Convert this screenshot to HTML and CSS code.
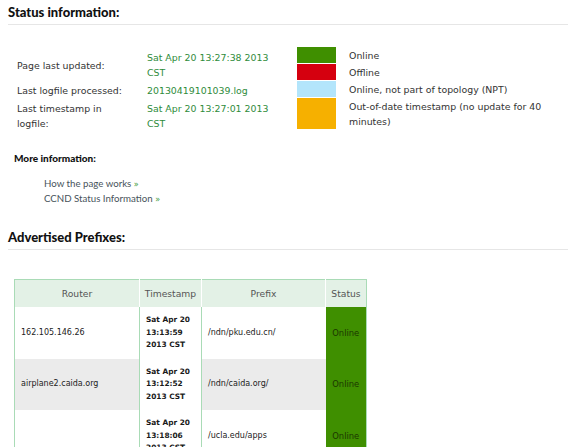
FILE: index.html
```html
<!DOCTYPE html>
<html lang="en">
<head>
<meta charset="utf-8">
<title>NDN Status</title>
<link rel="stylesheet" href="styles.css">
</head>
<body>
<div class="page">
  <h2 class="section-title">Status information:</h2>

  <div class="status">
    <div class="status-facts">
      <div class="fact-label">Page last updated:</div>
      <div class="fact-value">Sat Apr 20 13:27:38 2013 CST</div>
      <div class="fact-label">Last logfile processed:</div>
      <div class="fact-value">20130419101039.log</div>
      <div class="fact-label">Last timestamp in logfile:</div>
      <div class="fact-value">Sat Apr 20 13:27:01 2013 CST</div>
    </div>

    <div class="legend">
      <span class="swatch swatch-online"></span>
      <span class="legend-text">Online</span>
      <span class="swatch swatch-offline"></span>
      <span class="legend-text">Offline</span>
      <span class="swatch swatch-npt"></span>
      <span class="legend-text">Online, not part of topology (NPT)</span>
      <span class="swatch swatch-stale"></span>
      <span class="legend-text">Out-of-date timestamp (no update for 40 minutes)</span>
    </div>
  </div>

  <h3 class="sub-title">More information:</h3>
  <ul class="more-links">
    <li><a href="#">How the page works <span class="chev">&raquo;</span></a></li>
    <li><a href="#">CCND Status Information <span class="chev">&raquo;</span></a></li>
  </ul>

  <h2 class="section-title prefixes-title">Advertised Prefixes:</h2>

  <table class="prefixes">
    <thead>
      <tr>
        <th class="col-router">Router</th>
        <th class="col-time">Timestamp</th>
        <th class="col-prefix">Prefix</th>
        <th class="col-status">Status</th>
      </tr>
    </thead>
    <tbody>
      <tr>
        <td class="router">162.105.146.26</td>
        <td class="time">Sat Apr 20 13:13:59 2013 CST</td>
        <td class="prefix">/ndn/pku.edu.cn/</td>
        <td class="state online">Online</td>
      </tr>
      <tr class="alt">
        <td class="router">airplane2.caida.org</td>
        <td class="time">Sat Apr 20 13:12:52 2013 CST</td>
        <td class="prefix">/ndn/caida.org/</td>
        <td class="state online">Online</td>
      </tr>
      <tr>
        <td class="router"></td>
        <td class="time">Sat Apr 20 13:18:06 2013 CST</td>
        <td class="prefix">/ucla.edu/apps</td>
        <td class="state online">Online</td>
      </tr>
    </tbody>
  </table>
</div>
</body>
</html>
```

FILE: styles.css
```css
html {
  overflow: hidden;
}

body {
  margin: 0;
  background: #fff;
  color: #333;
  font-family: "DejaVu Sans", Verdana, sans-serif;
}

.page {
  padding: 4px 0 0 8px;
}

/* Section headings with a faint rule underneath */
.section-title {
  margin: 0;
  padding-bottom: 4px;
  font-family: Lato, "Open Sans", sans-serif;
  font-size: 13px;
  font-weight: 900;
  line-height: 16px;
  color: #111;
  border-bottom: 1px solid #e6e6e6;
}

.prefixes-title {
  margin-top: 23px;
}

/* Status facts + colour legend */
.status {
  display: flex;
  align-items: flex-start;
  margin-top: 22px;
  font-size: 9.4px;
  line-height: 15px;
}

.status-facts {
  display: grid;
  grid-template-columns: 110px 128px;
  column-gap: 20px;
  row-gap: 1px;
  margin-top: 2px;
  padding-left: 9px;
}

.fact-label {
  align-self: center;
  padding: 1px 0;
  color: #333;
}

.fact-value {
  padding: 1px 0;
  color: #2e8b3a;
}

.legend {
  display: grid;
  grid-template-columns: 39px 200px;
  column-gap: 13px;
  row-gap: 1px;
  margin-left: 22px;
}

.swatch {
  display: block;
}

.swatch-online { background: #3f8f00; }
.swatch-offline { background: #d5000f; }
.swatch-npt { background: #b3e5fb; }
.swatch-stale { background: #f6b000; }

.legend-text {
  padding: 1px 0 0;
  color: #333;
}

/* More information links */
.sub-title {
  margin: 19px 0 0;
  padding-left: 6px;
  font-family: Lato, "Open Sans", sans-serif;
  font-size: 10px;
  font-weight: 900;
  line-height: 14px;
  color: #111;
}

.more-links {
  list-style: none;
  margin: 11px 0 0;
  padding-left: 36px;
  font-family: Lato, "Open Sans", sans-serif;
  font-size: 9.7px;
  line-height: 15px;
}

.more-links li {
  height: 15px;
}

.more-links a {
  color: #47535b;
  text-decoration: none;
}

.chev {
  font-family: "DejaVu Sans", sans-serif;
  font-size: 8px;
  line-height: 1;
  color: #3a9a3a;
}

/* Advertised prefixes table */
.prefixes {
  margin: 29px 0 0 6px;
  border-collapse: collapse;
  border: 1px solid #a9dbb6;
  font-size: 8px;
  color: #222;
}

.prefixes th {
  height: 27px;
  padding: 0;
  background: #e3f1e6;
  border-left: 1px solid #fff;
  border-right: 1px solid #fff;
  font-size: 9.2px;
  font-weight: normal;
  color: #555;
  text-align: center;
}

.prefixes th:first-child {
  border-left-color: #a9dbb6;
}

.prefixes th:last-child {
  border-right-color: #a9dbb6;
}

.col-router { width: 124px; }
.col-time { width: 61px; }
.col-prefix { width: 123px; }
.col-status { width: 40px; }

.prefixes td {
  padding: 7px 6px;
  line-height: 12.5px;
  vertical-align: middle;
}

.prefixes tr.alt td {
  background: #ebebeb;
}

.prefixes td.time,
.prefixes tr.alt td.time {
  background: #fff;
  border-left: 1px solid #a9dbb6;
  border-right: 1px solid #a9dbb6;
  font-weight: bold;
  font-size: 7.4px;
  color: #1a1a1a;
}

.prefixes td.state,
.prefixes tr.alt td.state {
  padding: 0;
  text-align: center;
  font-size: 8.4px;
  background: #3f8f00;
  color: #1b3600;
}
```
